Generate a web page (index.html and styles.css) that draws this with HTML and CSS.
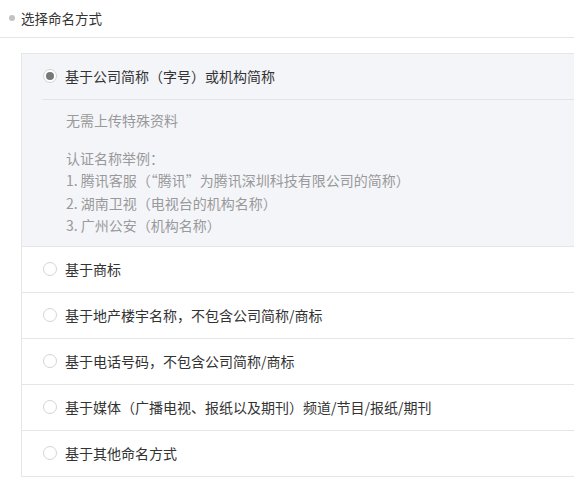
FILE: index.html
```html
<!DOCTYPE html>
<html lang="zh-CN">
<head>
    <meta charset="UTF-8">
    <meta name="viewport" content="width=device-width, initial-scale=1.0">
    <title>选择命名方式</title>
    <link rel="stylesheet" href="styles.css">
</head>
<body>

    <div class="section-title">
        <span class="dot"></span>
        <span>选择命名方式</span>
    </div>

    <ul class="options">
        <li class="option selected">
            <div class="option-head">
                <span class="radio"></span>
                <span class="label">基于公司简称（字号）或机构简称</span>
            </div>
            <div class="option-desc">
                <p>无需上传特殊资料</p>
                <p>认证名称举例：<br>
                    1. 腾讯客服（“腾讯”为腾讯深圳科技有限公司的简称）<br>
                    2. 湖南卫视（电视台的机构名称）<br>
                    3. 广州公安（机构名称）</p>
            </div>
        </li>
        <li class="option">
            <div class="option-head">
                <span class="radio"></span>
                <span class="label">基于商标</span>
            </div>
        </li>
        <li class="option">
            <div class="option-head">
                <span class="radio"></span>
                <span class="label">基于地产楼宇名称，不包含公司简称/商标</span>
            </div>
        </li>
        <li class="option">
            <div class="option-head">
                <span class="radio"></span>
                <span class="label">基于电话号码，不包含公司简称/商标</span>
            </div>
        </li>
        <li class="option">
            <div class="option-head">
                <span class="radio"></span>
                <span class="label">基于媒体（广播电视、报纸以及期刊）频道/节目/报纸/期刊</span>
            </div>
        </li>
        <li class="option">
            <div class="option-head">
                <span class="radio"></span>
                <span class="label">基于其他命名方式</span>
            </div>
        </li>
    </ul>

</body>
</html>
```

FILE: styles.css
```css
* {
    margin: 0;
    padding: 0;
    box-sizing: border-box;
}

body {
    font-family: "Noto Sans CJK SC", "Liberation Sans", sans-serif;
    font-size: 14px;
    color: #333;
    background: #fff;
    overflow: hidden;
}

.section-title {
    display: flex;
    align-items: center;
    height: 38px;
    padding-left: 9px;
    padding-bottom: 2px;
    border-bottom: 1px solid #e6e6e6;
    font-size: 13.5px;
    color: #333;
}

.dot {
    width: 6px;
    height: 6px;
    border-radius: 50%;
    background: #c2c2c2;
    margin-right: 6px;
}

.options {
    list-style: none;
    margin: 15px 0 0 21px;
    border-left: 1px solid #e6e6e6;
    border-top: 1px solid #e6e6e6;
}

.option {
    border-bottom: 1px solid #e6e6e6;
}

.option.selected {
    background: #f4f5f9;
}

.option-head {
    display: flex;
    align-items: center;
    height: 45px;
    padding-left: 21px;
    padding-bottom: 1px;
}

.selected .option-head {
    margin-left: 20px;
    padding-left: 1px;
    height: 46px;
    border-bottom: 1px solid #e3e4e8;
}

.radio {
    width: 14px;
    height: 14px;
    border: 1px solid #d4d4d4;
    border-radius: 50%;
    background: #fff;
    margin-right: 8px;
    display: flex;
    align-items: center;
    justify-content: center;
}

.selected .radio::after {
    content: "";
    width: 8px;
    height: 8px;
    border-radius: 50%;
    background: #777;
}

.option-desc {
    padding: 9px 0 10px 44px;
    color: #999;
    line-height: 22.2px;
}

.option-desc p + p {
    margin-top: 16px;
}
```
